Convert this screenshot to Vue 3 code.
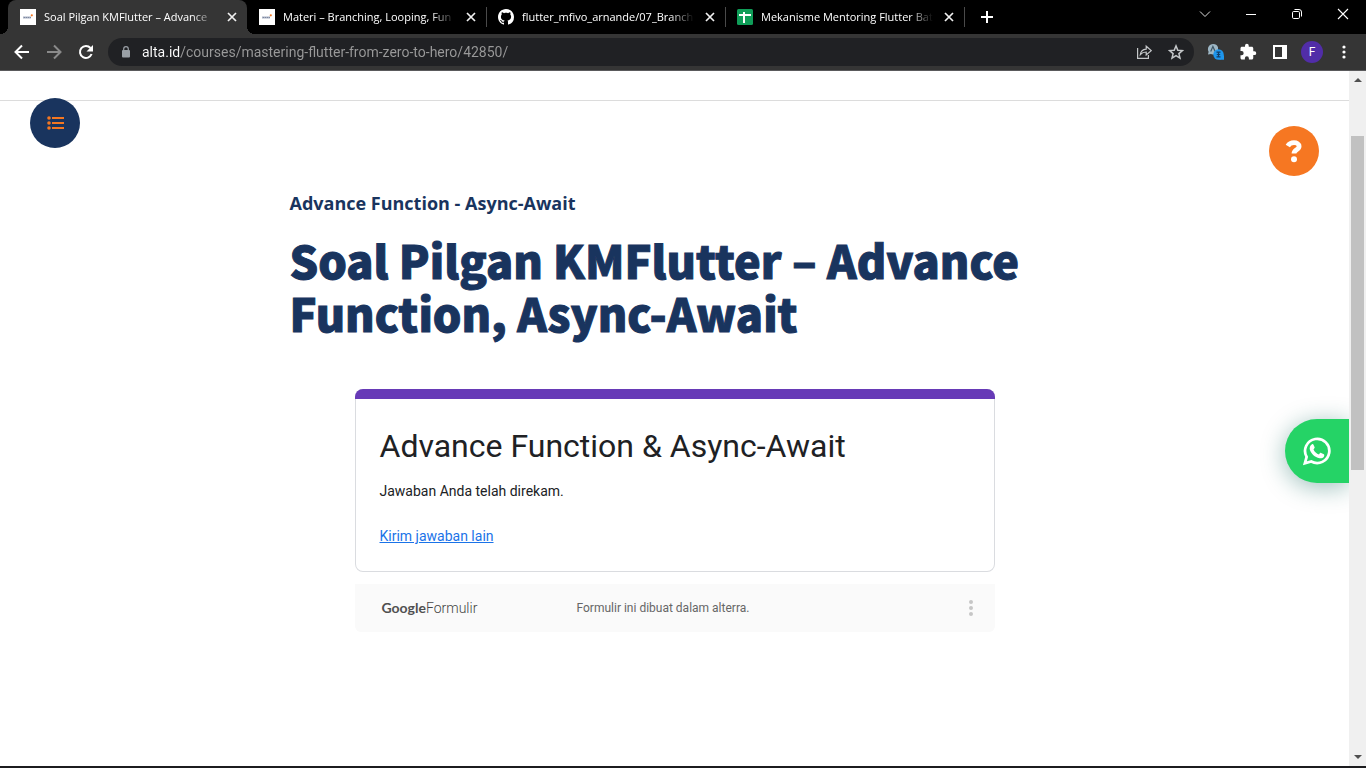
<script setup>
import { ref } from 'vue'

const tabs = [
  { title: 'Soal Pilgan KMFlutter – Advance', icon: 'alta', active: true },
  { title: 'Materi – Branching, Looping, Fun', icon: 'alta' },
  { title: 'flutter_mfivo_arnande/07_Branch', icon: 'github' },
  { title: 'Mekanisme Mentoring Flutter Bat', icon: 'sheets' }
]
const address = ref('alta.id/courses/mastering-flutter-from-zero-to-hero/42850/')
</script>

<template>
  <div class="browser">
    <header class="titlebar">
      <div class="tabs">
        <div v-for="tab in tabs" :key="tab.title" class="tab" :class="{ active: tab.active }">
          <svg v-if="tab.icon === 'alta'" class="favicon" viewBox="0 0 16 16">
            <path fill="#fff" d="M0 0h16v16H0z" />
            <path d="M3 8.500h8" stroke="#a9b1c2" stroke-width="2" />
            <path d="M4 8.500h1M6 8.500h1M8 8.500h1M10 8.500h1" stroke="#7d88a1" stroke-width="1" />
            <circle cx="11.800" cy="6.300" r="1.100" fill="#f47721" />
          </svg>
          <svg v-else-if="tab.icon === 'github'" class="favicon" viewBox="0 0 16 16">
            <path fill="#fff" d="M8 0C3.58 0 0 3.58 0 8c0 3.54 2.29 6.53 5.47 7.59.4.07.55-.17.55-.38 0-.19-.01-.82-.01-1.49-2.01.37-2.53-.49-2.69-.94-.09-.23-.48-.94-.82-1.13-.28-.15-.68-.52-.01-.53.63-.01 1.08.58 1.23.82.72 1.21 1.87.87 2.33.66.07-.52.28-.87.51-1.07-1.78-.2-3.64-.89-3.64-3.95 0-.87.31-1.59.82-2.15-.08-.2-.36-1.02.08-2.12 0 0 .67-.21 2.2.82.64-.18 1.32-.27 2-.27s1.36.09 2 .27c1.53-1.04 2.2-.82 2.2-.82.44 1.1.16 1.92.08 2.12.51.56.82 1.27.82 2.15 0 3.07-1.87 3.75-3.65 3.95.29.25.54.73.54 1.48 0 1.07-.01 1.93-.01 2.2 0 .21.15.46.55.38A8.01 8.01 0 0 0 16 8c0-4.42-3.58-8-8-8z" />
          </svg>
          <svg v-else class="favicon" viewBox="0 0 16 16">
            <rect width="16" height="16" rx="1.5" fill="#0f9d58" />
            <path d="M2 6h12M7 3v11" stroke="#fff" stroke-width="2" />
          </svg>
          <span class="tab-title">{{ tab.title }}</span>
          <button class="tab-close" aria-label="Close tab">
            <svg width="16" height="16" viewBox="0 0 16 16"><path d="M4 4l8 8M12 4l-8 8" stroke="#f1f1f1" stroke-width="1.7" /></svg>
          </button>
        </div>
        <button class="new-tab" aria-label="New tab">
          <svg width="14" height="14" viewBox="0 0 14 14"><path d="M1 7h12M7 1v12" stroke="#fff" stroke-width="2" /></svg>
        </button>
      </div>
      <div class="window-controls">
        <button aria-label="Search tabs"><svg width="12" height="12" viewBox="0 0 12 12"><path d="M1 3.5l5 5 5-5" fill="none" stroke="#ddd" /></svg></button>
        <button aria-label="Minimize"><svg width="12" height="12" viewBox="0 0 12 12"><path d="M1 6.5h10" stroke="#fff" /></svg></button>
        <button aria-label="Restore">
          <svg width="12" height="12" viewBox="0 0 12 12" fill="none" stroke="#fff"><rect x="1.5" y="3.5" width="7" height="7" rx="1.2" /><path d="M3.5 1.5H8A2.5 2.5 0 0 1 10.500 4v4.500" /></svg>
        </button>
        <button aria-label="Close window"><svg width="12" height="12" viewBox="0 0 12 12"><path d="M1 1l10 10M11 1L1 11" stroke="#fff" stroke-width="1.1" /></svg></button>
      </div>
    </header>

    <nav class="toolbar" aria-label="Browser toolbar">
      <button class="tool" aria-label="Back">
        <svg width="16" height="16" viewBox="0 0 16 16" fill="none" stroke="#fff" stroke-width="2"><path d="M15 8H2M8 1.500L1.500 8 8 14.500" /></svg>
      </button>
      <button class="tool" aria-label="Forward">
        <svg width="16" height="16" viewBox="0 0 16 16" fill="none" stroke="#8a8a8a" stroke-width="2"><path d="M1 8h13M8 1.500L14.500 8 8 14.500" /></svg>
      </button>
      <button class="tool" aria-label="Reload">
        <svg width="16" height="16" viewBox="0 0 16 16"><path d="M13.600 10A6 6 0 1 1 12.500 4" fill="none" stroke="#fff" stroke-width="2" /><path d="M15 1v6.500H8.500z" fill="#fff" /></svg>
      </button>
      <div class="omnibox">
        <svg class="lock" width="10" height="12" viewBox="0 0 10 12"><rect x="1" y="4" width="8" height="7.500" rx="1" fill="#9aa0a6" /><path d="M2.700 5V3a2.300 2.300 0 0 1 4.600 0v2" fill="none" stroke="#9aa0a6" stroke-width="1.200" /></svg>
        <input v-model="address" class="address" type="text" aria-label="Address" spellcheck="false" />
        <button class="tool" aria-label="Share">
          <svg width="16" height="16" viewBox="0 0 16 16" fill="none" stroke="#c4c7c9" stroke-width="1.200"><path d="M1.600 4v10.400h10.800V11" /><path d="M4.300 10.700c.4-3.500 2.500-5.300 5.900-5.600V2.200l5 4.400-5 4.300V8c-2.500 0-4.300.8-5.900 2.700z" /></svg>
        </button>
        <button class="tool" aria-label="Bookmark">
          <svg width="16" height="16" viewBox="0 0 16 16"><path d="M8 1.900l1.800 4.300 4.600.4-3.500 3 1.100 4.500L8 11.700l-4 2.400 1.100-4.500-3.500-3 4.600-.4z" fill="none" stroke="#c4c7c9" stroke-width="1.500" /></svg>
        </button>
      </div>
      <div class="extensions">
        <button class="tool" aria-label="Translate">
          <svg width="18" height="18" viewBox="0 0 18 18"><path d="M6 1a5.200 5.200 0 1 0 1.500 10.200L11 9.500V4.300A5.200 5.200 0 0 0 6 1zM1.500 9l-.5 2.500 3-.5z" fill="#9db6c4" /><path d="M3.700 8.500l2.200-5 2.200 5" fill="none" stroke="#3d5666" stroke-width="1.200" /><circle cx="11.500" cy="11.500" r="5.200" fill="#1e96ed" /><path d="M12 16.700h5v-5z" fill="#1e96ed" /><path d="M9.500 9.200h4M9.500 13.800h4M11.500 9v5M9.800 11.500h3.400" stroke="#123f69" stroke-width="1.200" /></svg>
        </button>
        <button class="tool" aria-label="Extensions">
          <svg width="18" height="18" viewBox="0 0 24 24"><path fill="#fff" d="M20.500 11H19V7c0-1.100-.9-2-2-2h-4V3.500a2.500 2.500 0 0 0-5 0V5H4c-1.100 0-2 .9-2 2v3.800h1.500a2.700 2.700 0 0 1 0 5.400H2V20c0 1.100.9 2 2 2h3.800v-1.500a2.700 2.700 0 0 1 5.400 0V22H17c1.100 0 2-.9 2-2v-4h1.500a2.500 2.500 0 0 0 0-5z" /></svg>
        </button>
        <button class="tool" aria-label="Side panel">
          <svg width="14" height="14" viewBox="0 0 14 14"><path fill="#fff" fill-rule="evenodd" d="M0 0h14v14H0zM2 2v10h7V2z" /></svg>
        </button>
        <button class="tool" aria-label="Profile"><span class="avatar">F</span></button>
        <button class="tool" aria-label="Menu">
          <svg width="4" height="14" viewBox="0 0 4 14" fill="#fff"><circle cx="2" cy="2" r="1.600" /><circle cx="2" cy="7" r="1.600" /><circle cx="2" cy="12" r="1.600" /></svg>
        </button>
      </div>
    </nav>

    <div class="viewport">
      <div class="page">
        <div class="site-bar"></div>
        <button class="round menu" aria-label="Course contents">
          <svg width="18" height="14" viewBox="0 0 18 14"><g fill="#f47721"><circle cx="3" cy="2" r="1.800" /><circle cx="3" cy="7" r="1.800" /><circle cx="3" cy="12" r="1.800" /></g><path d="M6 2h12M6 7h12M6 12h12" stroke="#f47721" stroke-width="2" /></svg>
        </button>
        <button class="round help" aria-label="Help">
          <svg width="18" height="24" viewBox="0 0 18 24"><path d="M2.800 7C4.200 4.500 6.300 3.700 9 3.700c2.900 0 5.100 1.300 5.100 3.600 0 3.700-5.100 3.300-5.100 7.200" fill="none" stroke="#fff" stroke-width="4.800" /><circle cx="9" cy="20.300" r="3" fill="#fff" /></svg>
        </button>
        <a class="whatsapp" href="#" aria-label="WhatsApp">
          <svg width="30" height="30" viewBox="0 0 24 24"><path fill="none" stroke="#fff" stroke-width="2.200" d="M2.300 21.800l1.400-5.100A9.700 9.700 0 1 1 7.400 20.400z" /><path fill="#fff" d="M8 6.500c.5-.2 1-.1 1.200.4l.9 2.100c.1.400 0 .7-.9 1.700.9 1.900 2.400 3.200 4.400 4 .9-1.100 1.200-1.400 1.700-1.200l2.200 1.100c.5.300.4 1.100 0 1.900-.6 1.100-2.300 1.600-3.500 1.300-3.900-.9-6.500-3.600-7.600-6.400-.7-2 .1-4.200 1.600-4.900z" /></svg>
        </a>

        <main class="lesson">
          <p class="section-name">Advance Function - Async-Await</p>
          <h1>Soal Pilgan KMFlutter – Advance Function, Async-Await</h1>
          <section class="form">
            <div class="card">
              <h2>Advance Function &amp; Async-Await</h2>
              <p>Jawaban Anda telah direkam.</p>
              <a href="#">Kirim jawaban lain</a>
            </div>
            <footer class="form-footer">
              <span class="brand"><b>Google</b>Formulir</span>
              <span class="notice">Formulir ini dibuat dalam alterra.</span>
              <button class="more" aria-label="More options">
                <svg width="6" height="16" viewBox="0 0 6 16" fill="#c6c6c6"><circle cx="3" cy="2" r="2" /><circle cx="3" cy="8" r="2" /><circle cx="3" cy="14" r="2" /></svg>
              </button>
            </footer>
          </section>
        </main>
      </div>
      <div class="scrollbar">
        <svg class="arrow" width="8" height="4" viewBox="0 0 8 4"><path d="M0 4l4-4 4 4z" fill="#505050" /></svg>
        <div class="track"><div class="thumb"></div></div>
        <svg class="arrow" width="8" height="4" viewBox="0 0 8 4"><path d="M0 0h8L4 4z" fill="#505050" /></svg>
      </div>
    </div>
  </div>
</template>

<style>
body {
  margin: 0;
  background: #fff;
}
</style>

<style scoped>
.browser {
  box-sizing: border-box;
  display: flex;
  flex-direction: column;
  min-height: 100vh;
  border-bottom: 2px solid #1c1c1f;
  font-family: "Open Sans", "Noto Sans", sans-serif;
}
button {
  display: flex;
  align-items: center;
  justify-content: center;
  padding: 0;
  border: 0;
  background: none;
  font: inherit;
  cursor: pointer;
}
svg {
  display: block;
  flex: none;
}
.titlebar {
  display: flex;
  justify-content: space-between;
  height: 34px;
  background: #000;
}
.tabs {
  display: flex;
  flex: 1;
  min-width: 0;
  padding-left: 8px;
}
.tab {
  position: relative;
  box-sizing: border-box;
  display: flex;
  align-items: center;
  flex: 0 1 239px;
  min-width: 0;
  gap: 8px;
  padding: 0 7px 0 12px;
  color: #fff;
  font-size: 11px;
}
.tab:not(.active)::after {
  content: "";
  position: absolute;
  right: -1px;
  top: 7px;
  width: 1px;
  height: 20px;
  background: #4a4a4a;
}
.tab.active {
  border-radius: 8px 8px 0 0;
  background: #353535;
}
.tab.active::before,
.tab.active::after {
  content: "";
  position: absolute;
  bottom: 0;
  width: 8px;
  height: 8px;
}
.tab.active::before {
  left: -8px;
  background: radial-gradient(circle at 0 0, transparent 8px, #353535 8px);
}
.tab.active::after {
  right: -8px;
  background: radial-gradient(circle at 100% 0, transparent 8px, #353535 8px);
}
.favicon {
  width: 16px;
  height: 16px;
}
.tab-title {
  flex: 1;
  min-width: 0;
  overflow: hidden;
  white-space: nowrap;
  line-height: 18px;
  mask-image: linear-gradient(to left, transparent, #000 24px);
}
.new-tab {
  width: 28px;
  margin-left: 9px;
}
.window-controls {
  display: flex;
  height: 28px;
}
.window-controls button {
  width: 46px;
}
.toolbar {
  box-sizing: border-box;
  display: flex;
  align-items: center;
  height: 37px;
  padding: 0 6px;
  border-bottom: 1px solid #5a5a5c;
  background: #353535;
}
.tool {
  flex: none;
  width: 32px;
  height: 28px;
}
.omnibox {
  box-sizing: border-box;
  display: flex;
  align-items: center;
  flex: 1;
  min-width: 0;
  height: 28px;
  margin: 0 6px;
  padding: 0 2px 0 13px;
  border-radius: 14px;
  background: #202124;
}
.address {
  flex: 1;
  min-width: 0;
  height: 28px;
  margin-left: 11px;
  padding: 0;
  border: 0;
  outline: 0;
  background: linear-gradient(90deg, #fff 39px, #9a9a9a 39px);
  background-clip: text;
  -webkit-background-clip: text;
  color: transparent;
  caret-color: #fff;
  font: 14px Roboto, sans-serif;
}
.extensions {
  display: flex;
}
.avatar {
  width: 22px;
  height: 22px;
  border-radius: 50%;
  background: #512da8;
  color: #fff;
  font: 12px/22px Roboto, sans-serif;
}
.viewport {
  display: flex;
  flex: 1;
}
.page {
  position: relative;
  flex: 1;
  min-width: 0;
  overflow: hidden;
  background: #fff;
}
.site-bar {
  height: 29px;
  border-bottom: 1px solid #dcdcdc;
}
.round {
  position: absolute;
  width: 50px;
  height: 50px;
  border-radius: 50%;
}
.menu {
  top: 27px;
  left: 30px;
  background: #19345e;
}
.help {
  top: 55px;
  right: 30px;
  background: #f67722;
}
.whatsapp {
  position: absolute;
  top: 348px;
  right: 0;
  display: flex;
  align-items: center;
  justify-content: center;
  width: 64px;
  height: 64px;
  border-radius: 32px 0 0 32px;
  background: #25d366;
  box-shadow: 0 4px 24px rgba(7, 94, 84, 0.4);
}
.lesson {
  max-width: 770px;
  margin: 0 auto;
  padding: 89px 24px 24px;
  color: #19345e;
}
.section-name {
  margin: 0;
  font-size: 18px;
  font-weight: 700;
  line-height: 27px;
}
h1 {
  margin: 16px 0 50px;
  font: 900 45px/53px "Noto Sans CJK JP", Lato, sans-serif;
  -webkit-text-stroke: 1px #19345e;
}
.form {
  max-width: 640px;
  margin: 0 auto;
  font-family: Roboto, sans-serif;
}
.card {
  position: relative;
  overflow: hidden;
  padding: 35px 25px 26px;
  border-radius: 8px;
  box-shadow: inset 0 0 0 1px #dadce0;
  color: #202124;
  font-size: 14px;
  line-height: 20px;
}
.card::before {
  content: "";
  position: absolute;
  inset: 0 0 auto;
  height: 10px;
  background: #673ab7;
}
h2 {
  margin: 0 0 13px;
  font-size: 32px;
  font-weight: 400;
  line-height: 44px;
}
.card p {
  margin: 0 0 25px;
}
.card a {
  display: block;
  width: fit-content;
  color: #1a73e8;
}
.form-footer {
  display: grid;
  grid-template-columns: 195px 1fr auto;
  align-items: center;
  height: 47px;
  margin-top: 12px;
  padding: 0 21px 1px 27px;
  border-radius: 0 0 6px 6px;
  background: #fafafa;
}
.brand {
  color: #444;
  font-size: 14px;
  font-weight: 300;
  line-height: 16px;
}
.brand b {
  color: #505050;
  font: 700 14px/16px Lato, sans-serif;
}
.notice {
  color: #666;
  font-size: 12px;
}
.scrollbar {
  box-sizing: border-box;
  display: flex;
  flex-direction: column;
  align-items: center;
  width: 17px;
  padding: 7px 0;
  background: #f0f0f0;
}
.track {
  flex: 1;
  align-self: stretch;
  padding: 54px 2px 0;
}
.thumb {
  height: 334px;
  background: #c1c1c1;
}
</style>
